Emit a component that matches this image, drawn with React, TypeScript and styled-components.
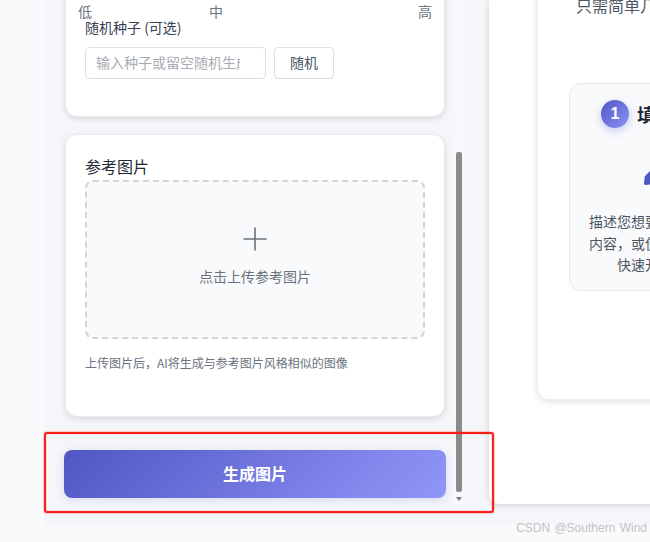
import { createGlobalStyle } from "styled-components";
import styled from "styled-components";

const GlobalStyle = createGlobalStyle`
  html, body {
    margin: 0;
    padding: 0;
    background: #f9fafc;
    overflow: hidden;
  }
  * { box-sizing: border-box; }
`;

const Page = styled.div`
  position: relative;
  width: 650px;
  height: 542px;
  overflow: hidden;
  font-family: "Noto Sans CJK SC", "Liberation Sans", sans-serif;
  color: #374151;
`;

const Main = styled.div`
  display: flex;
  align-items: flex-start;
  height: 525px;
  margin-left: 44px;
  background: #f5f6fa;
`;

const LeftPanel = styled.div`
  display: flex;
  flex: 0 0 445px;
  height: 100%;
  padding-left: 20px;
`;

const Column = styled.div`
  flex: 0 0 382px;
  display: flex;
  flex-direction: column;
`;

const Card = styled.section`
  margin: 0 1px;
  background: #fff;
  border: 1px solid #e8eaef;
  border-radius: 12px;
  box-shadow: 0 2px 6px rgba(0, 0, 0, 0.12);
`;

const SeedCard = styled(Card)`
  margin-top: -20px;
  padding: 20px 19px 37px;
`;

const RangeLabels = styled.div`
  display: flex;
  justify-content: space-between;
  height: 18px;
  margin: 0 -7px;
  font-size: 14px;
  line-height: 20px;
  color: #6b7280;

  span:nth-child(2) {
    margin-right: 78px;
  }
`;

const FieldLabel = styled.label`
  display: block;
  margin-bottom: 12px;
  font-size: 14px;
  line-height: 16px;
  color: #374151;
`;

const SeedRow = styled.div`
  display: flex;
  gap: 8px;
`;

const SeedInput = styled.input`
  width: 181px;
  height: 32px;
  padding: 0 25px 2px 10px;
  border: 1px solid #dcdfe6;
  border-radius: 4px;
  background: #fff;
  font: inherit;
  font-size: 14px;
  outline: none;

  &::placeholder {
    color: #a8abb2;
  }
`;

const SeedButton = styled.button`
  width: 60px;
  height: 32px;
  padding: 0 0 2px;
  border: 1px solid #dcdfe6;
  border-radius: 4px;
  background: #fff;
  font: inherit;
  font-size: 14px;
  color: #4b5563;
`;

const ReferenceCard = styled(Card)`
  margin-top: 17px;
  padding: 19px 19px 44px;
`;

const CardTitle = styled.h3`
  margin: 0 0 2px;
  font-size: 16px;
  font-weight: 400;
  line-height: 24px;
  color: #1f2937;
`;

const Upload = styled.div`
  display: flex;
  flex-direction: column;
  align-items: center;
  height: 159px;
  padding-top: 44px;
  border: 2px dashed #d1d5db;
  border-radius: 8px;
  background: #f9fafb;
`;

const UploadText = styled.div`
  margin-top: 14px;
  font-size: 14px;
  line-height: 20px;
  color: #6b7280;
`;

const Hint = styled.p`
  margin: 15px 0 0;
  font-size: 12px;
  line-height: 18px;
  color: #6b7280;
`;

const GenerateButton = styled.button`
  height: 48px;
  margin-top: 33px;
  padding: 0 0 3px;
  border: 0;
  border-radius: 8px;
  background: linear-gradient(135deg, #5056c4, #9197f8);
  box-shadow: 0 2px 8px rgba(83, 89, 200, 0.18);
  font: inherit;
  font-size: 16px;
  font-weight: 700;
  color: #fff;
`;

const ScrollTrack = styled.div`
  display: flex;
  flex-direction: column;
  align-items: center;
  flex: 0 0 10px;
  height: 503px;
  margin-left: 8px;
  background: #f8f8fb;
`;

const ScrollThumb = styled.div`
  width: 6px;
  height: 340px;
  margin-top: 152px;
  border-radius: 2px;
  background: #8b8b8b;
`;

const ScrollArrow = styled.div`
  width: 0;
  height: 0;
  margin-top: 5px;
  border-left: 3.5px solid transparent;
  border-right: 3.5px solid transparent;
  border-top: 4px solid #7a7a7a;
`;

const RightPanel = styled.div`
  flex: 0 0 190px;
  height: 504px;
  padding-left: 48px;
  overflow: hidden;
  background: #fff;
  border-bottom-left-radius: 10px;
  box-shadow: 0 1px 6px rgba(0, 0, 0, 0.16);
`;

const GuideCard = styled.div`
  width: 320px;
  height: 440px;
  margin-top: -40px;
  padding: 32px 31px 0;
  background: #fff;
  border: 1px solid #eceef2;
  border-radius: 12px;
  box-shadow: 0 2px 6px rgba(0, 0, 0, 0.12);
`;

const GuideIntro = styled.p`
  margin: 0 0 66px 7px;
  font-size: 16px;
  line-height: 24px;
  white-space: nowrap;
  color: #4b5563;
`;

const StepCard = styled.div`
  width: 236px;
  height: 208px;
  padding: 16px 19px 0;
  background: #f9fafc;
  border: 1px solid #e6e8ee;
  border-radius: 12px;
  text-align: center;
`;

const StepHeader = styled.div`
  display: flex;
  align-items: center;
  gap: 8px;
  height: 28px;
  padding-left: 12px;
`;

const StepBadge = styled.div`
  display: flex;
  align-items: center;
  justify-content: center;
  flex: 0 0 28px;
  height: 28px;
  border-radius: 50%;
  background: linear-gradient(135deg, #5056c4, #8d93f5);
  box-shadow: 0 3px 8px rgba(83, 89, 200, 0.3);
  font-family: "Liberation Sans", sans-serif;
  font-size: 16px;
  font-weight: 700;
  color: #fff;
`;

const StepTitle = styled.div`
  padding-bottom: 1px;
  font-size: 18px;
  font-weight: 700;
  line-height: 26px;
  white-space: nowrap;
  color: #1f2937;
`;

const StepIcon = styled.div`
  display: flex;
  height: 32px;
  margin: 25px 0 26px;
  padding-left: 55px;
  color: #5056c4;
`;

const StepText = styled.p`
  margin: 0;
  font-size: 14px;
  line-height: 21.5px;
  white-space: nowrap;
  color: #4b5563;
`;

const Annotation = styled.div`
  position: absolute;
  left: 44px;
  top: 432px;
  width: 450px;
  height: 81px;
  border: 2px solid #f7201a;
  border-radius: 3px;
  box-shadow: 0 0 1.5px #f7201a, inset 0 0 1px #f7201a;
  pointer-events: none;
`;

const Watermark = styled.div`
  position: absolute;
  right: 3px;
  top: 520px;
  font-family: "Liberation Sans", sans-serif;
  font-size: 12px;
  line-height: 17px;
  word-spacing: 1px;
  color: #c2c2c2;
`;

const PlusIcon = () => (
  <svg width="26" height="26" viewBox="0 0 26 26" fill="none" stroke="#6b7280" strokeWidth="1.6">
    <path d="M13 1.500V24.500M1.500 13H24.500" />
  </svg>
);

const PencilIcon = () => (
  <svg width="32" height="32" viewBox="0 0 512 512" fill="currentColor">
    <path d="M290.740 93.240l128.020 128.020-277.990 277.990-114.140 12.600C11.350 513.540-1.560 500.620.140 485.340l12.700-114.220 277.900-277.880zm207.200-19.060l-60.110-60.110c-18.750-18.750-49.160-18.750-67.910 0l-56.550 56.550 128.020 128.020 56.550-56.550c18.750-18.760 18.750-49.160 0-67.910z" />
  </svg>
);

export default function App() {
  return (
    <Page>
      <GlobalStyle />
      <Main>
        <LeftPanel>
          <Column>
            <SeedCard>
              <RangeLabels>
                <span>低</span>
                <span>中</span>
                <span>高</span>
              </RangeLabels>
              <FieldLabel>随机种子 (可选)</FieldLabel>
              <SeedRow>
                <SeedInput placeholder="输入种子或留空随机生成" />
                <SeedButton>随机</SeedButton>
              </SeedRow>
            </SeedCard>
            <ReferenceCard>
              <CardTitle>参考图片</CardTitle>
              <Upload>
                <PlusIcon />
                <UploadText>点击上传参考图片</UploadText>
              </Upload>
              <Hint>上传图片后，AI将生成与参考图片风格相似的图像</Hint>
            </ReferenceCard>
            <GenerateButton>生成图片</GenerateButton>
          </Column>
          <ScrollTrack>
            <ScrollThumb />
            <ScrollArrow />
          </ScrollTrack>
        </LeftPanel>
        <RightPanel>
          <GuideCard>
            <GuideIntro>只需简单几步，即可生成图片</GuideIntro>
            <StepCard>
              <StepHeader>
                <StepBadge>1</StepBadge>
                <StepTitle>填写提示词</StepTitle>
              </StepHeader>
              <StepIcon>
                <PencilIcon />
              </StepIcon>
              <StepText>
                描述您想要生成的图片及其具体
                <br />
                内容，或使用下方的提示词模板
                <br />
                快速开始您的创作之旅
              </StepText>
            </StepCard>
          </GuideCard>
        </RightPanel>
      </Main>
      <Annotation />
      <Watermark>CSDN @Southern Wind</Watermark>
    </Page>
  );
}
